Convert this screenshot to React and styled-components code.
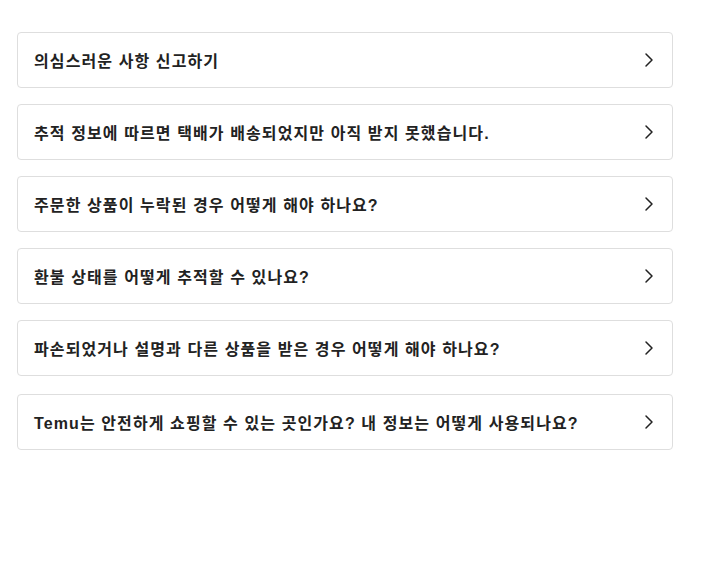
import React from 'react';
import styled, { createGlobalStyle } from 'styled-components';
import { ChevronRight } from 'lucide-react';

const GlobalStyle = createGlobalStyle`
  body {
    margin: 0;
    background: #fff;
    font-family: "Liberation Sans", "Noto Sans CJK KR", sans-serif;
  }
`;

const List = styled.ul`
  list-style: none;
  margin: 0;
  padding: 32px 52px 0 17px;
  width: 656px;
  display: flex;
  flex-direction: column;
  gap: 16px;
`;

const Item = styled.li`
  display: flex;
  align-items: center;
  justify-content: space-between;
  height: 56px;
  box-sizing: border-box;
  padding: 0 11px 0 16px;
  border: 1px solid #dedede;
  border-radius: 4px;
  cursor: pointer;

  &:last-child {
    margin-top: 2px;
  }
`;

const Question = styled.span`
  font-size: 16px;
  font-weight: 700;
  letter-spacing: 1.1px;
  color: #222;
`;

const Arrow = styled(ChevronRight)`
  color: #222;
  flex-shrink: 0;
`;

const questions = [
  '의심스러운 사항 신고하기',
  '추적 정보에 따르면 택배가 배송되었지만 아직 받지 못했습니다.',
  '주문한 상품이 누락된 경우 어떻게 해야 하나요?',
  '환불 상태를 어떻게 추적할 수 있나요?',
  '파손되었거나 설명과 다른 상품을 받은 경우 어떻게 해야 하나요?',
  'Temu는 안전하게 쇼핑할 수 있는 곳인가요? 내 정보는 어떻게 사용되나요?',
];

export default function App() {
  return (
    <>
      <GlobalStyle />
      <List>
        {questions.map((q) => (
          <Item key={q}>
            <Question>{q}</Question>
            <Arrow size={24} strokeWidth={1.5} />
          </Item>
        ))}
      </List>
    </>
  );
}
